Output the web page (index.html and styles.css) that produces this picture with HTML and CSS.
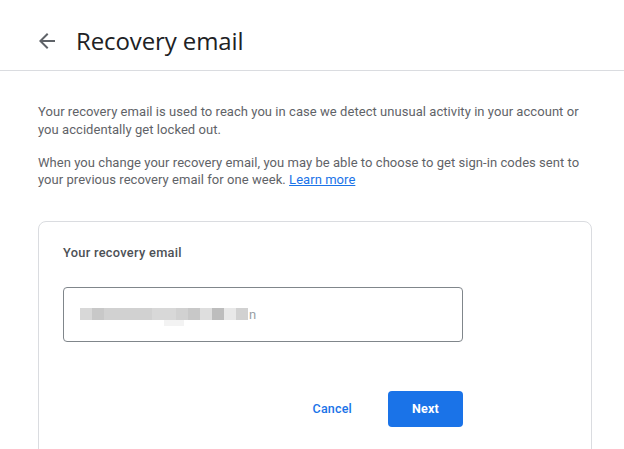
FILE: index.html
```html
<!DOCTYPE html>
<html lang="en">
<head>
<meta charset="utf-8">
<title>Recovery email</title>
<link rel="stylesheet" href="styles.css">
</head>
<body>
<header class="topbar">
  <button class="back" aria-label="Back">
    <svg viewBox="0 0 24 24" width="24" height="24"><path d="M20 11H7.83l5.59-5.59L12 4l-8 8 8 8 1.41-1.41L7.83 13H20v-2z"/></svg>
  </button>
  <h1 class="title">Recovery email</h1>
</header>
<main class="content">
  <p class="desc">Your recovery email is used to reach you in case we detect unusual activity in your account or you accidentally get locked out.</p>
  <p class="desc">When you change your recovery email, you may be able to choose to get sign-in codes sent to your previous recovery email for one week. <a href="#" class="link">Learn more</a></p>
  <section class="card">
    <div class="label">Your recovery email</div>
    <div class="field">
      <div class="blur">
        <span class="px s1"></span><span class="px s3"></span><span class="px s2"></span><span class="px s2"></span><span class="px s2"></span><span class="px s2"></span><span class="px s1"></span><span class="px s1 with-drop"></span><span class="px s2"></span><span class="px s3"></span><span class="px s5"></span><span class="px s4"></span><span class="px s6"></span><span class="px s2"></span><span class="tail">n</span>
      </div>
    </div>
    <div class="actions">
      <button class="btn-text">Cancel</button>
      <button class="btn-primary">Next</button>
    </div>
  </section>
</main>
</body>
</html>
```
FILE: styles.css
```css
* { box-sizing: border-box; }
html, body { margin: 0; background: #fff; }
body { font-family: Roboto, "Noto Sans", Arial, sans-serif; color: #202124; overflow: hidden; }

.topbar {
  height: 71px;
  display: flex;
  align-items: center;
  padding: 11px 0 0 35px;
  border-bottom: 1px solid #dadce0;
}
.back {
  width: 24px; height: 24px; padding: 0; border: 0; background: none;
  display: flex; fill: #5f6368;
}
.title {
  margin: 0 0 0 17px;
  font-family: "Open Sans", Roboto, sans-serif;
  font-weight: 400;
  font-size: 24px;
  line-height: 32px;
  color: #202124;
  letter-spacing: -0.1px;
}

.content { padding: 32px 32px 0 38px; }
.desc {
  margin: 0 0 15.5px;
  font-size: 13px;
  line-height: 17.5px;
  letter-spacing: 0.05px;
  color: #5f6368;
}
.link { color: #1a73e8; text-decoration: underline; }

.card {
  margin-top: 32px;
  border: 1px solid #dadce0;
  border-radius: 8px;
  padding: 23px 24px 40px;
  height: 260px;
}
.label {
  font-size: 12.8px;
  font-weight: 500;
  color: #4d5156;
  letter-spacing: 0.3px;
}
.field {
  margin-top: 27px;
  width: 400px;
  height: 55px;
  border: 1px solid #80868b;
  border-radius: 4px;
  display: flex;
  align-items: center;
  padding-left: 16px;
}
.blur { display: flex; align-items: center; }
.px { width: 12px; height: 12px; display: block; position: relative; }
.s1 { background: #d8d8d8; }
.s2 { background: #d1d1d1; }
.s3 { background: #c8c8c8; }
.s4 { background: #bdbdbd; }
.s5 { background: #dedede; }
.s6 { background: #e8e8e8; }
.with-drop::after {
  content: ""; position: absolute; left: 0; top: 12px;
  width: 20px; height: 6px; background: #f3f3f3;
}
.tail { font-size: 13px; color: #9aa0a6; margin-left: 1px; }

.actions {
  width: 400px;
  display: flex;
  justify-content: flex-end;
  align-items: center;
  margin-top: 49px;
  gap: 36px;
}
.btn-text {
  border: 0; background: none; padding: 0;
  font-family: Roboto, sans-serif; font-size: 12.5px; font-weight: 500;
  color: #1a73e8; letter-spacing: 0.2px;
}
.btn-primary {
  width: 75px; height: 36px;
  border: 0; border-radius: 4px;
  background: #1a73e8; color: #fff;
  font-family: Roboto, sans-serif; font-size: 12.5px; font-weight: 700;
  letter-spacing: 0.2px;
}
```
